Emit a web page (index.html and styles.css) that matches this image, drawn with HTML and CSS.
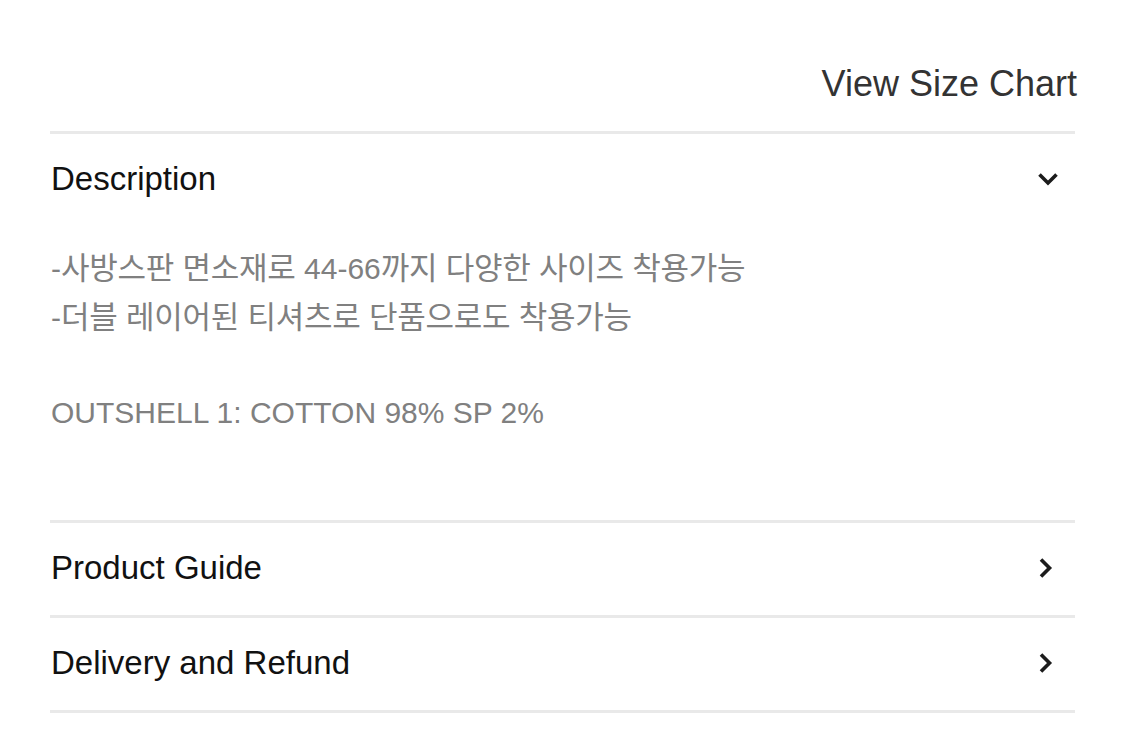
FILE: index.html
```html
<!DOCTYPE html>
<html lang="ko">
<head>
<meta charset="utf-8">
<title>Product details</title>
<link rel="stylesheet" href="styles.css">
</head>
<body>
<main class="panel">
  <div class="size-row">
    <a class="size-link" href="#">View Size Chart</a>
  </div>

  <section class="acc acc-open">
    <div class="acc-head">
      <span class="acc-title">Description</span>
      <svg class="chev chev-down" width="24" height="24" viewBox="0 0 24 24"><polyline points="3.5,7.5 12,16 20.5,7.5"/></svg>
    </div>
    <div class="acc-body">
      <p class="kr">-<span class="ko">사방스판 면소재로 </span>44-66<span class="ko">까지 다양한 사이즈 착용가능</span><br>-<span class="ko">더블 레이어된 티셔츠로 단품으로도 착용가능</span></p>
      <p class="spec">OUTSHELL 1: COTTON 98% SP 2%</p>
    </div>
  </section>

  <section class="acc">
    <div class="acc-head">
      <span class="acc-title">Product Guide</span>
      <svg class="chev chev-right" width="24" height="24" viewBox="0 0 24 24"><polyline points="7,3.5 15.5,12 7,20.5"/></svg>
    </div>
  </section>

  <section class="acc acc-last">
    <div class="acc-head">
      <span class="acc-title">Delivery and Refund</span>
      <svg class="chev chev-right" width="24" height="24" viewBox="0 0 24 24"><polyline points="7,3.5 15.5,12 7,20.5"/></svg>
    </div>
  </section>
</main>
</body>
</html>
```
FILE: styles.css
```css
html, body {
  margin: 0;
  padding: 0;
  background: #ffffff;
}

body {
  font-family: "Liberation Sans", Arial, "Noto Sans CJK KR", sans-serif;
}

.panel {
  padding: 0 50px;
}

.size-row {
  display: flex;
  justify-content: flex-end;
  padding: 64px 0 27px;
  height: 40px;
}

.size-link {
  font-size: 36px;
  line-height: 40px;
  color: #333333;
  text-decoration: none;
  margin-right: -2px;
}

.acc {
  border-top: 3px solid #e9e9e9;
}

.acc-last {
  border-bottom: 3px solid #e9e9e9;
}

.acc-head {
  height: 89px;
  padding-bottom: 3px;
  display: flex;
  align-items: center;
  justify-content: space-between;
}

.acc-title {
  font-size: 33px;
  line-height: 40px;
  color: #111111;
  padding-left: 1px;
}

.chev {
  fill: none;
  stroke: #1c1c1c;
  stroke-width: 3.6;
  stroke-linejoin: miter;
}

.chev-down {
  margin-right: 15px;
}

.chev-right {
  margin-right: 17px;
}

.acc-body {
  padding: 18px 0 83px;
  color: #808080;
  font-size: 30px;
}

.acc-body p {
  margin: 0;
  line-height: 49px;
  padding-left: 1px;
}

.ko {
  font-family: "Noto Sans CJK KR", sans-serif;
  font-size: 31px;
  line-height: 1;
  letter-spacing: -0.25px;
}

.spec {
  margin-top: 46px !important;
}
```
